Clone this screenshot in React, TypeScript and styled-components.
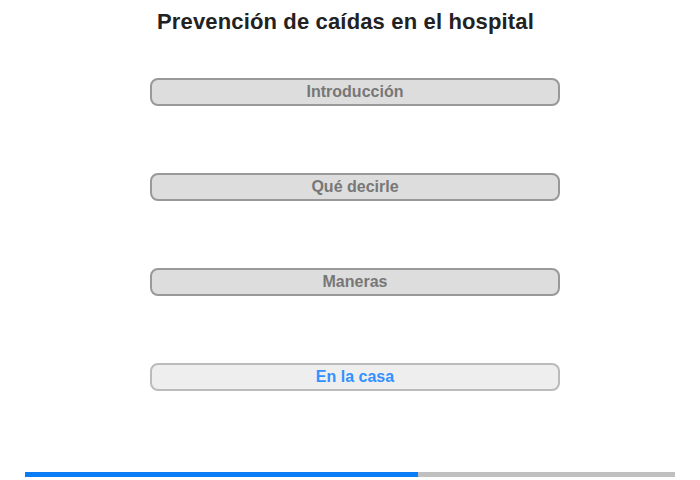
import React from "react";
import styled, { createGlobalStyle } from "styled-components";

const Global = createGlobalStyle`
  html, body { margin: 0; padding: 0; background: #fff; }
  body { font-family: "Liberation Sans", Arial, sans-serif; }
`;

const Page = styled.div`
  width: 700px;
  height: 480px;
  display: flex;
  flex-direction: column;
  box-sizing: border-box;
`;

const Title = styled.h1`
  margin: 9px 0 0 0;
  padding-left: 157px;
  font-size: 22px;
  line-height: 26px;
  letter-spacing: 0.15px;
  font-weight: bold;
  color: #222;
`;

const Menu = styled.div`
  margin: 43px 0 0 150px;
  width: 410px;
  display: flex;
  flex-direction: column;
  gap: 67px;
`;

const Item = styled.div<{ $active?: boolean }>`
  box-sizing: border-box;
  height: 28px;
  border: 2px solid ${(p) => (p.$active ? "#bbb" : "#999")};
  background: ${(p) => (p.$active ? "#eee" : "#ddd")};
  border-radius: 8px;
  display: flex;
  align-items: center;
  justify-content: center;
  font-size: 16px;
  font-weight: bold;
  color: ${(p) => (p.$active ? "#3391ff" : "#777")};
`;

const Progress = styled.div`
  margin: 81px 0 0 25px;
  width: 650px;
  height: 5px;
  background: #c0c0c0;
  display: flex;
`;

const Fill = styled.div`
  height: 100%;
  background: #0a7cf6;
`;

export default function App() {
  const items = ["Introducción", "Qué decirle", "Maneras", "En la casa"];
  return (
    <Page>
      <Global />
      <Title>Prevención de caídas en el hospital</Title>
      <Menu>
        {items.map((t, i) => (
          <Item key={t} $active={i === 3}>
            {t}
          </Item>
        ))}
      </Menu>
      <Progress>
        <Fill style={{ width: `${(393 / 650) * 100}%` }} />
      </Progress>
    </Page>
  );
}
